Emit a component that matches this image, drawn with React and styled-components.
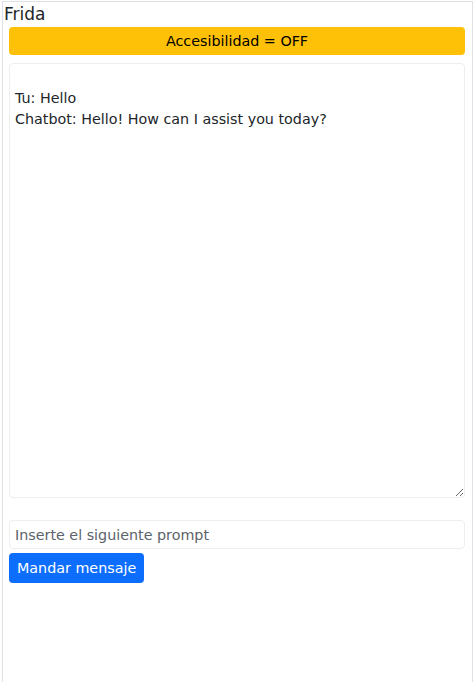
import React, { useState } from "react";
import styled, { createGlobalStyle } from "styled-components";

const GlobalStyle = createGlobalStyle`
  body {
    margin: 0;
    background: #ffffff;
    font-family: "DejaVu Sans", sans-serif;
    color: #212529;
  }
`;

const Frame = styled.div`
  margin: 1px 2px 0 2px;
  min-height: 700px;
  border: 1px solid #dee2e6;
  border-bottom: none;
`;

const Title = styled.div`
  font-size: 17px;
  line-height: 25px;
  padding-left: 1px;
`;

const Panel = styled.div`
  display: flex;
  flex-direction: column;
  padding: 0 7px 0 6px;
`;

const ToggleButton = styled.button`
  height: 28px;
  border: none;
  border-radius: 4px;
  background: #ffc107;
  color: #000;
  font-family: "DejaVu Sans", sans-serif;
  font-size: 14.3px;
`;

const Chat = styled.textarea`
  margin-top: 8px;
  height: 435px;
  box-sizing: border-box;
  border: 1px solid #eceef0;
  border-radius: 4px;
  padding: 3px 5px;
  font-family: "DejaVu Sans", sans-serif;
  font-size: 14.3px;
  line-height: 21px;
  color: #212529;
  resize: vertical;
  outline: none;
`;

const PromptInput = styled.input`
  margin-top: 22px;
  height: 29px;
  box-sizing: border-box;
  border: 1px solid #eceef0;
  border-radius: 4px;
  padding: 0 5px;
  font-family: "DejaVu Sans", sans-serif;
  font-size: 14.3px;
  color: #212529;
  outline: none;

  &::placeholder {
    color: #5c636a;
  }
`;

const SendButton = styled.button`
  align-self: flex-start;
  margin-top: 4px;
  height: 30px;
  padding: 0 8px;
  border: none;
  border-radius: 4px;
  background: #0d6efd;
  color: #fff;
  font-family: "DejaVu Sans", sans-serif;
  font-size: 14.3px;
`;

export default function App() {
  const [access, setAccess] = useState(false);
  const [log] = useState("\nTu: Hello\nChatbot: Hello! How can I assist you today?");
  return (
    <>
      <GlobalStyle />
      <Frame>
        <Title>Frida</Title>
        <Panel>
          <ToggleButton onClick={() => setAccess((a) => !a)}>
            Accesibilidad = {access ? "ON" : "OFF"}
          </ToggleButton>
          <Chat value={log} readOnly />
          <PromptInput placeholder="Inserte el siguiente prompt" />
          <SendButton>Mandar mensaje</SendButton>
        </Panel>
      </Frame>
    </>
  );
}
